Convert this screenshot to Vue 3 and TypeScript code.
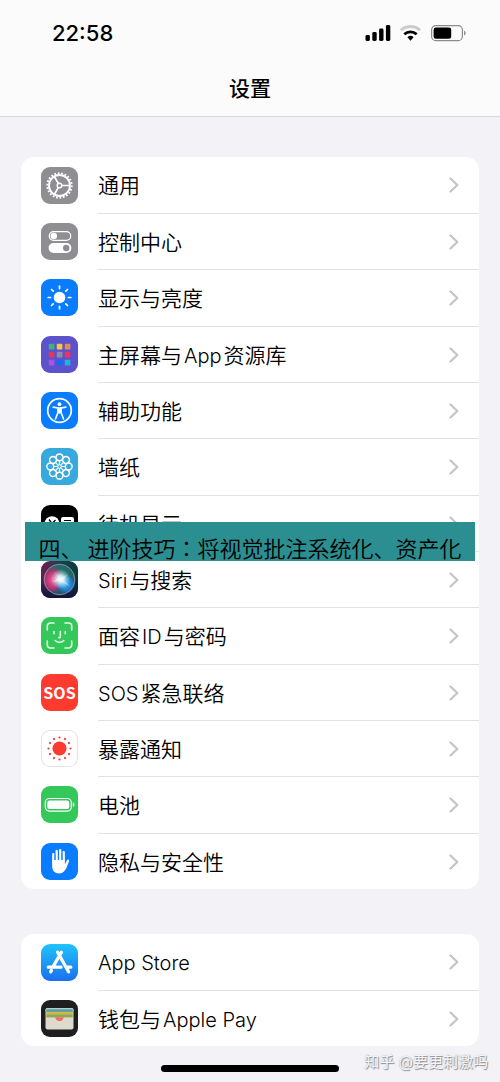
<script setup lang="ts">
type IconName =
  | 'gear' | 'toggles' | 'sun' | 'grid' | 'access' | 'flower' | 'standby' | 'siri'
  | 'face' | 'sos' | 'exposure' | 'battery' | 'hand' | 'store' | 'wallet'

interface Part {
  text: string
  latin?: boolean
}

interface Item {
  icon: IconName
  parts: Part[]
}

const zh = (text: string): Part => ({ text })
const en = (text: string): Part => ({ text, latin: true })

const groups: Item[][] = [
  [
    { icon: 'gear', parts: [zh('通用')] },
    { icon: 'toggles', parts: [zh('控制中心')] },
    { icon: 'sun', parts: [zh('显示与亮度')] },
    { icon: 'grid', parts: [zh('主屏幕与'), en('App'), zh('资源库')] },
    { icon: 'access', parts: [zh('辅助功能')] },
    { icon: 'flower', parts: [zh('墙纸')] },
    { icon: 'standby', parts: [zh('待机显示')] },
    { icon: 'siri', parts: [en('Siri'), zh('与搜索')] },
    { icon: 'face', parts: [zh('面容'), en('ID'), zh('与密码')] },
    { icon: 'sos', parts: [en('SOS'), zh('紧急联络')] },
    { icon: 'exposure', parts: [zh('暴露通知')] },
    { icon: 'battery', parts: [zh('电池')] },
    { icon: 'hand', parts: [zh('隐私与安全性')] },
  ],
  [
    { icon: 'store', parts: [en('App Store')] },
    { icon: 'wallet', parts: [zh('钱包与'), en('Apple Pay')] },
  ],
]

const around = (count: number): number[] => Array.from({ length: count }, (_, i) => (i * 360) / count)

const tiles: string[] = [
  '#3fb37f', '#fbc545', '#e68c50',
  '#e23a55', '#8f8ca8', '#f6305c',
  '#a855e0', '#0a6ff2', '#22b4d6',
]
</script>

<template>
  <div class="screen">
    <header class="top">
      <div class="status">
        <span class="time">22:58</span>
        <svg class="signals" width="102" height="18" viewBox="0 0 102 18" aria-hidden="true">
          <g fill="#000">
            <rect x="0.5" y="11" width="4.4" height="6" rx="1.4" />
            <rect x="7.3" y="8" width="4.4" height="9" rx="1.4" />
            <rect x="14.1" y="4.6" width="4.4" height="12.4" rx="1.4" />
            <rect x="20.9" y="1" width="4.4" height="16" rx="1.4" />
          </g>
          <g fill="none" stroke-width="2.8">
            <path d="M35.9 6.3a14 14 0 0 1 19.2 0" stroke="#cbcbcb" />
            <path d="M39.3 10.2a9.2 9.2 0 0 1 12.4 0" stroke="#000" />
          </g>
          <path d="M42.4 13.2a4.6 4.6 0 0 1 6.2 0L45.5 16.8z" fill="#000" />
          <rect x="66.6" y="1.6" width="30.8" height="15" rx="4.2" fill="none" stroke="#8c8c8c" stroke-width="1.2" />
          <rect x="68.6" y="3.4" width="17.6" height="11.4" rx="2.4" fill="#000" />
          <path d="M99.2 6.8c1.8.6 1.8 4 0 4.6z" fill="#777" />
        </svg>
      </div>
      <h1 class="title">设置</h1>
    </header>

    <main class="content">
      <ul v-for="(group, g) in groups" :key="g" class="card">
        <li v-for="item in group" :key="item.icon" class="row">
          <a class="link" href="#">
            <svg class="icon" :class="item.icon" viewBox="0 0 37 37" aria-hidden="true">
              <g v-if="item.icon === 'gear'" fill="none" stroke="#fff">
                <circle cx="18.5" cy="18.5" r="12.2" stroke-width="2" pathLength="44" stroke-dasharray="1 1" />
                <circle cx="18.5" cy="18.5" r="10.5" stroke-width="1.9" />
                <circle cx="18.5" cy="18.5" r="2.3" stroke-width="1.4" />
                <path d="M20.8 18.5H29M17.3 16.4L13.3 9.5M17.3 20.6L13.3 27.5" stroke-width="1.7" />
              </g>
              <g v-else-if="item.icon === 'toggles'">
                <rect x="8.3" y="8.6" width="21.4" height="8.8" rx="4.4" fill="none" stroke="#fff" stroke-width="1.3" />
                <circle cx="12.8" cy="13" r="3.2" fill="#fff" />
                <rect x="7.6" y="20" width="22.8" height="10" rx="5" fill="#fff" />
                <circle cx="25.2" cy="25" r="3.2" fill="#8e8e93" />
              </g>
              <g v-else-if="item.icon === 'sun'">
                <circle cx="18.5" cy="18.5" r="5.8" fill="#fff" />
                <path
                  v-for="a in around(8)" :key="a" d="M18.5 9.6V7.2" :transform="`rotate(${a} 18.5 18.5)`"
                  stroke="#fff" stroke-width="1.7" stroke-linecap="round"
                />
              </g>
              <g v-else-if="item.icon === 'grid'">
                <rect
                  v-for="(c, i) in tiles" :key="i" :x="7.8 + (i % 3) * 8" :y="7.8 + Math.floor(i / 3) * 8"
                  width="5.6" height="5.6" rx="0.6" :fill="c"
                />
              </g>
              <g v-else-if="item.icon === 'access'">
                <circle cx="18.5" cy="18.5" r="11.8" fill="none" stroke="#fff" stroke-width="1.7" />
                <circle cx="18.5" cy="12.2" r="1.9" fill="#fff" />
                <path
                  d="M12.2 15.1L17 16v4.3L14.5 27M24.8 15.1L20 16v4.3L22.5 27" fill="none" stroke="#fff"
                  stroke-width="1.6" stroke-linecap="round" stroke-linejoin="round"
                />
                <path d="M16.5 15.3h4v5.5l-2 1.2-2-1.2z" fill="#fff" />
              </g>
              <g v-else-if="item.icon === 'flower'" fill="none" stroke="#fff">
                <g v-for="a in around(8)" :key="a" :transform="`rotate(${a} 18.5 18.5)`">
                  <circle cx="18.5" cy="9.3" r="3.4" stroke-width="1.5" />
                  <path d="M18.5 12.7V17" stroke-width="1.2" />
                </g>
                <circle cx="18.5" cy="18.5" r="1.7" fill="#38a9dc" stroke-width="1" />
              </g>
              <g v-else-if="item.icon === 'standby'">
                <circle cx="11" cy="18.5" r="7.3" fill="#fff" />
                <path d="M8 14.5L11 18.5L14.5 15" fill="none" stroke="#000" stroke-width="1.3" />
                <rect x="20" y="12" width="13" height="13.5" rx="2" fill="#fff" />
                <path d="M23 15.5h7M23 19h7M23 22.5h7" stroke="#000" stroke-width="1.2" />
              </g>
              <g v-else-if="item.icon === 'siri'">
                <defs>
                  <linearGradient id="siri-back" x1="0" y1="0" x2="1" y2="0.3">
                    <stop offset="0" stop-color="#7a1550" />
                    <stop offset="0.5" stop-color="#1c4148" />
                    <stop offset="1" stop-color="#073a3c" />
                  </linearGradient>
                  <linearGradient id="siri-low" x1="0" y1="0" x2="0" y2="1">
                    <stop offset="0.4" stop-color="#15133c" stop-opacity="0" />
                    <stop offset="1" stop-color="#15133c" />
                  </linearGradient>
                  <radialGradient id="siri-pink">
                    <stop offset="0" stop-color="#ff5c9b" />
                    <stop offset="0.7" stop-color="#cf2874" stop-opacity="0.8" />
                    <stop offset="1" stop-color="#c31e68" stop-opacity="0" />
                  </radialGradient>
                  <radialGradient id="siri-blue">
                    <stop offset="0" stop-color="#4bb5ff" />
                    <stop offset="0.7" stop-color="#1d7ed0" stop-opacity="0.8" />
                    <stop offset="1" stop-color="#1766bd" stop-opacity="0" />
                  </radialGradient>
                  <radialGradient id="siri-glow">
                    <stop offset="0" stop-color="#fff" />
                    <stop offset="0.35" stop-color="#eafcff" stop-opacity="0.85" />
                    <stop offset="1" stop-color="#9fe8e0" stop-opacity="0" />
                  </radialGradient>
                </defs>
                <rect width="37" height="37" fill="url(#siri-back)" />
                <rect width="37" height="37" fill="url(#siri-low)" />
                <circle cx="18.5" cy="18.5" r="15.3" fill="#2b8d86" fill-opacity="0.55" />
                <ellipse cx="12" cy="19" rx="10.5" ry="13" fill="url(#siri-pink)" />
                <ellipse cx="24.5" cy="23" rx="10" ry="10" fill="url(#siri-blue)" />
                <circle cx="19.5" cy="18" r="10" fill="url(#siri-glow)" />
                <path d="M12 10L20 18L27 13L22 19L29 25L19 20L11 21L18 17Z" fill="#fff" fill-opacity="0.4" />
                <circle cx="18.5" cy="18.5" r="15.3" fill="none" stroke="#b5a7c4" stroke-opacity="0.7" stroke-width="1" />
              </g>
              <g v-else-if="item.icon === 'face'" fill="none" stroke="#e4fbe6" stroke-width="1.6" stroke-linecap="round">
                <path d="M6.3 13V9a3 3 0 0 1 3-3H13M24 6h3.7a3 3 0 0 1 3 3v4M30.7 24v4a3 3 0 0 1-3 3H24M13 31H9.3a3 3 0 0 1-3-3v-4" />
                <path d="M13 14.5v2.3M24.3 14.5v2.3M19.3 14.5v5.3a1 1 0 0 1-1.6.8M14.2 23.5c2.3 2.5 6.3 2.5 8.6 0" />
              </g>
              <text v-else-if="item.icon === 'sos'" class="sos-text" x="18.5" y="24.5" text-anchor="middle">SOS</text>
              <g v-else-if="item.icon === 'exposure'" fill="#fb3b30">
                <circle cx="18.5" cy="18.5" r="7" />
                <circle
                  v-for="a in around(12)" :key="a" cx="18.5" cy="7.5" r="1.1"
                  :transform="`rotate(${a} 18.5 18.5)`"
                />
              </g>
              <g v-else-if="item.icon === 'battery'">
                <rect x="4.3" y="12.5" width="26" height="12.6" rx="4" fill="none" stroke="#fff" stroke-width="1.2" />
                <rect x="6.3" y="14.5" width="22" height="8.6" rx="2.3" fill="#fff" />
                <path d="M31.8 16.6c2.2.6 2.2 3.8 0 4.4z" fill="#fff" />
              </g>
              <g v-else-if="item.icon === 'hand'">
                <path
                  d="M12.3 19.5V11.2M15.7 17V8M19.2 17V7.2M22.7 18V9.2" fill="none" stroke="#fff"
                  stroke-width="2.3" stroke-linecap="round"
                />
                <path
                  d="M11.15 17H23.85V21.2L26 17.2C26.8 15.9 28.5 16.7 28 18.2C26.7 21.8 25.5 25.2 23.8 27.6C22.3 29.7 20.6 30.5 18.3 30.5C13.7 30.5 11.15 27.6 11.15 23Z"
                  fill="#fff"
                />
                <path d="M14 11.5V17M17.45 9V16.5M20.95 10V17" stroke="#0a7cff" stroke-width="0.7" />
              </g>
              <g v-else-if="item.icon === 'store'">
                <defs>
                  <linearGradient id="store-back" x1="0" y1="0" x2="0" y2="1">
                    <stop offset="0" stop-color="#1fc3fb" />
                    <stop offset="1" stop-color="#1c70ee" />
                  </linearGradient>
                </defs>
                <rect width="37" height="37" fill="url(#store-back)" />
                <path
                  d="M20.4 8.3L12.4 22M10.4 26.4L9.7 27.7M16.6 8.3L27.6 27.7M7.3 23.2H20M25.6 23.2H29.8"
                  fill="none" stroke="#fff" stroke-width="3.3" stroke-linecap="round"
                />
              </g>
              <g v-else-if="item.icon === 'wallet'">
                <rect x="4.5" y="8" width="28" height="21.5" rx="2" fill="#dedacd" />
                <path d="M4.5 11V10a2 2 0 0 1 2-2h24a2 2 0 0 1 2 2v1z" fill="#a9d3d8" />
                <rect x="5.3" y="9.3" width="26.4" height="3" fill="#5f9aa6" />
                <rect x="5.3" y="11.8" width="26.4" height="3" fill="#ccbc45" />
                <rect x="5.3" y="14.4" width="26.4" height="3" fill="#8fa65c" />
                <path d="M14.2 17.2h8.6c-1 5.2-7.6 5.2-8.6 0z" fill="#ec6f5f" />
              </g>
            </svg>
            <span class="body">
              <span class="label">
                <span v-for="(part, p) in item.parts" :key="p" :class="{ latin: part.latin }">{{ part.text }}</span>
              </span>
              <svg class="chevron" width="10" height="16" viewBox="0 0 10 16" aria-hidden="true">
                <path d="M1.5 1.5L8.3 8L1.5 14.5" fill="none" stroke="#c4c4c7" stroke-width="2.2" stroke-linecap="round" stroke-linejoin="round" />
              </svg>
            </span>
          </a>
        </li>
      </ul>
    </main>

    <div class="home-bar"></div>
    <p class="banner">四、 进阶技巧：将视觉批注系统化、资产化</p>
    <p class="watermark">知乎 @要更刺激吗</p>
  </div>
</template>

<style>
body {
  margin: 0;
  background: #f2f2f7;
}
</style>

<style scoped>
.screen {
  position: relative;
  box-sizing: border-box;
  min-height: 100vh;
  padding-bottom: 10px;
  background: #f2f2f7;
  color: #000;
  font-family: Inter, "Noto Sans CJK SC", sans-serif;
}

.top {
  background: #fbfbfb;
  border-bottom: 1px solid #d9d9dc;
}

.status {
  display: flex;
  align-items: center;
  justify-content: space-between;
  height: 66px;
  padding: 0 33px 0 52px;
}

.time {
  font-size: 22px;
  font-weight: 500;
}

.title {
  margin: 0;
  height: 50px;
  font-size: 21px;
  line-height: 46px;
  font-weight: 500;
  text-align: center;
}

.content {
  display: grid;
  gap: 45px;
  padding: 40px 21px 0;
}

.card {
  margin: 0;
  padding: 0;
  overflow: hidden;
  list-style: none;
  background: #fff;
  border-radius: 13px;
}

.row {
  height: 56px;
}

.row:nth-child(3n) {
  height: 57px;
}

.link {
  display: flex;
  gap: 20px;
  height: 100%;
  padding-left: 20px;
  color: inherit;
  text-decoration: none;
}

.icon {
  flex: none;
  width: 37px;
  height: 37px;
  margin-top: 10px;
  border-radius: 9px;
}

.gear, .toggles { background: #8e8e93; }
.sun, .access, .hand { background: #0a7cff; }
.grid { background: #5b52cc; }
.flower { background: #38a9dc; }
.standby { background: #000; }
.face, .battery { background: #34c759; }
.sos { background: #ff3b30; }
.wallet { background: #1f1f21; }

.exposure {
  background: #fff;
  box-shadow: inset 0 0 0 1px #e3e3e6;
}

.sos-text {
  fill: #fff;
  font-family: "Noto Sans CJK SC", sans-serif;
  font-size: 16px;
  font-weight: 700;
}

.body {
  display: flex;
  flex: 1;
  align-items: center;
  justify-content: space-between;
  padding-right: 20px;
}

.row + .row .body {
  border-top: 1px solid #e2e2e4;
}

.label {
  display: flex;
  align-items: baseline;
  gap: 2px;
  padding-top: 2px;
  font-size: 21px;
  font-weight: 350;
  line-height: 30px;
}

.latin {
  font-size: 20px;
}

.home-bar {
  width: 178px;
  height: 7px;
  margin: 19px auto 0;
  border-radius: 4px;
  background: #000;
}

.banner {
  position: absolute;
  top: 522px;
  left: 25px;
  right: 25px;
  height: 39px;
  margin: 0;
  background: #2b8f92;
  font-family: "Noto Sans CJK JP", sans-serif;
  font-size: 22px;
  font-weight: 350;
  line-height: 50px;
  text-align: center;
  white-space: nowrap;
}

.watermark {
  position: absolute;
  right: 12px;
  bottom: 9px;
  margin: 0;
  color: #f6f6f8;
  font-size: 15px;
  line-height: 22px;
  text-shadow: 1px 1px 1px #8b8b90, 0 0 1px #a9a9ae;
}
</style>
